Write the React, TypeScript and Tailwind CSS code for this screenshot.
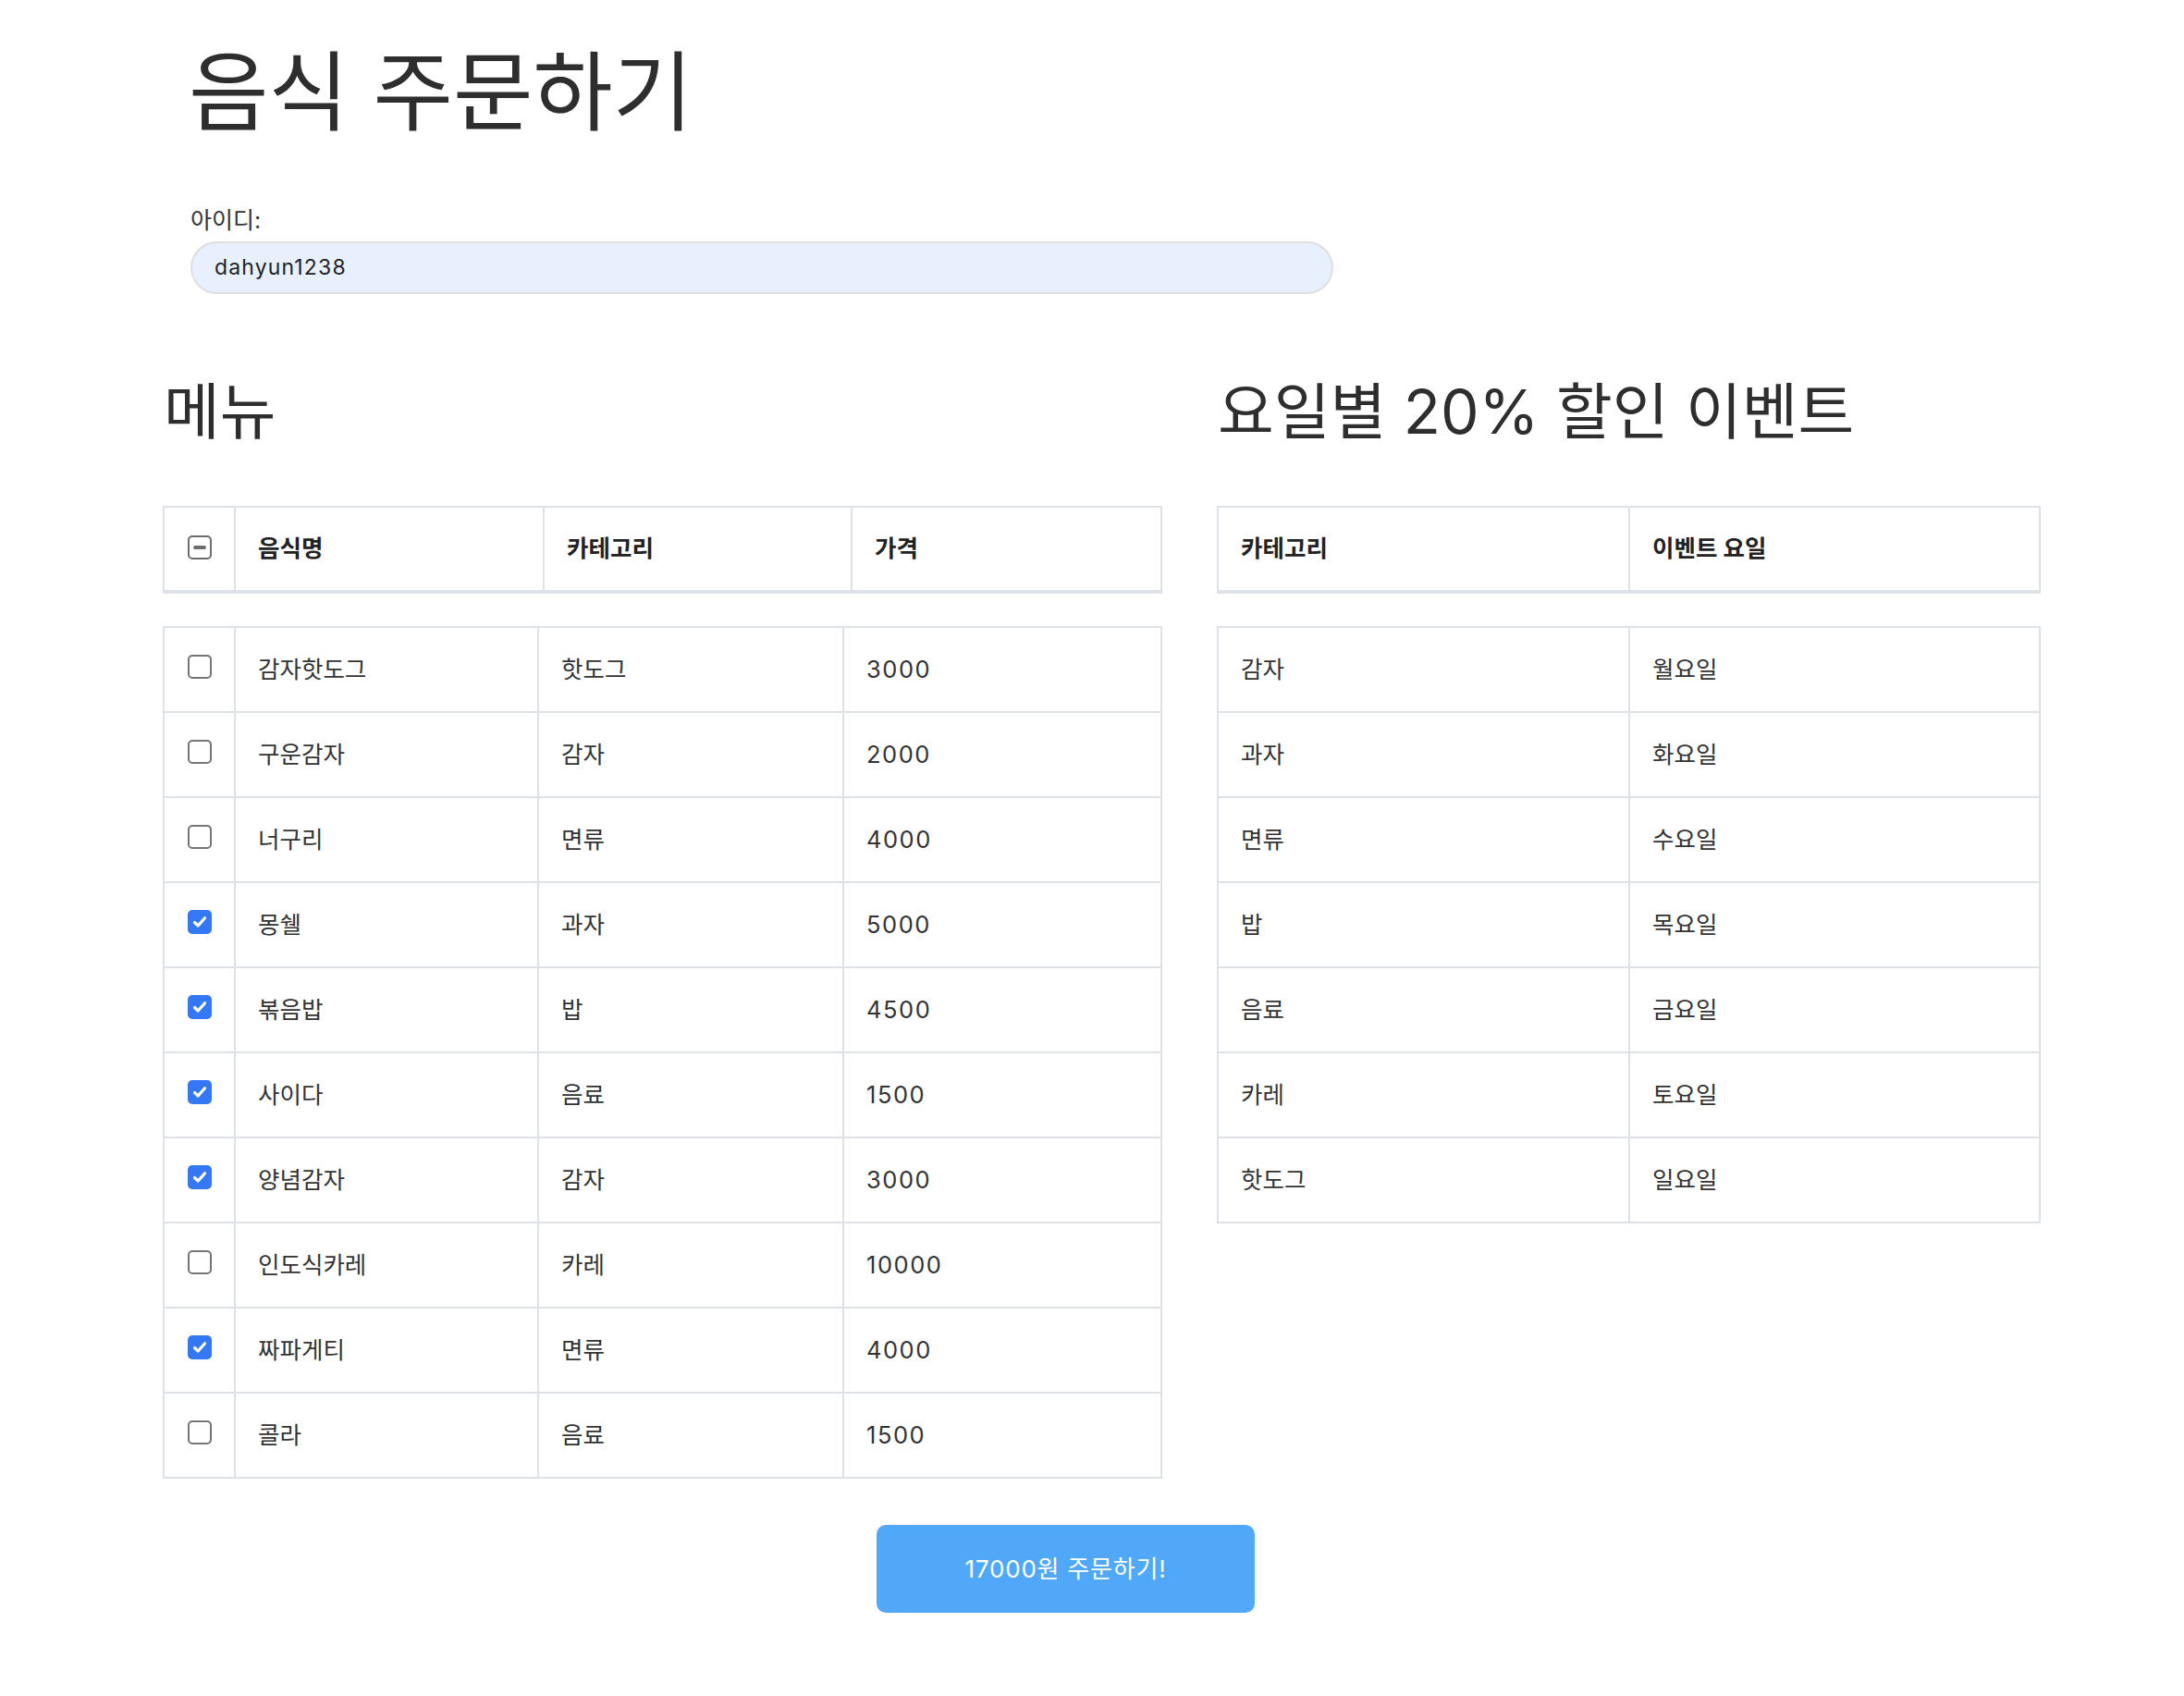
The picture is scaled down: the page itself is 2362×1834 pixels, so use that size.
import React from "react";

const items: [string, string, string, boolean][] = [
  ["감자핫도그", "핫도그", "3000", false],
  ["구운감자", "감자", "2000", false],
  ["너구리", "면류", "4000", false],
  ["몽쉘", "과자", "5000", true],
  ["볶음밥", "밥", "4500", true],
  ["사이다", "음료", "1500", true],
  ["양념감자", "감자", "3000", true],
  ["인도식카레", "카레", "10000", false],
  ["짜파게티", "면류", "4000", true],
  ["콜라", "음료", "1500", false],
];

const events: [string, string][] = [
  ["감자", "월요일"],
  ["과자", "화요일"],
  ["면류", "수요일"],
  ["밥", "목요일"],
  ["음료", "금요일"],
  ["카레", "토요일"],
  ["핫도그", "일요일"],
];

function Box({ checked }: { checked: boolean }) {
  if (checked) {
    return (
      <div className="w-[26px] h-[26px] rounded-[5px] bg-[#3478f6] flex items-center justify-center">
        <svg width="18" height="18" viewBox="0 0 18 18">
          <path d="M3.5 9.5 L7.2 13 L14.5 4.8" stroke="white" strokeWidth="3.2" fill="none" strokeLinecap="round" strokeLinejoin="round" />
        </svg>
      </div>
    );
  }
  return <div className="w-[26px] h-[26px] rounded-[5px] border-2 border-[#767676] bg-white" />;
}

function Indeterminate() {
  return (
    <div className="w-[26px] h-[26px] rounded-[5px] border-2 border-[#6d6d6d] bg-white flex items-center justify-center">
      <div className="w-[14px] h-[4px] rounded-[2px] bg-[#6d6d6d]" />
    </div>
  );
}

const cell = "border-2 border-[#dee2e6] align-middle";
const th = `${cell} border-b-4 pl-[24px] text-left text-[25.5px] font-bold text-[#222]`;
const td = `${cell} pl-[24px] text-[25.5px]`;

export default function App() {
  return (
    <div className="min-h-screen bg-white text-[#333] font-['Inter','Noto_Sans_CJK_KR',sans-serif] pt-[53px]">
      <div className="pl-[206px]">
        <h1 className="text-[94px] leading-none font-normal -ml-[2px] text-[#2e2e2e]">음식 주문하기</h1>
        <div className="mt-[79px] text-[25px] leading-none">아이디:</div>
        <div className="mt-[10px] w-[1236px] h-[57px] rounded-full bg-[#e8f0fe] border-2 border-[#dfdfdf] flex items-center pl-[24px] text-[23px] tracking-[0.05em] text-[#222]">
          dahyun1238
        </div>
      </div>

      <div className="flex pl-[176px] gap-[61px] mt-[94px]">
        <div className="w-[1079px]">
          <h2 className="text-[66px] leading-none font-normal ml-[1px] text-[#2e2e2e]">메뉴</h2>
          <table className="mt-[69px] w-[1079px] table-fixed border-collapse">
            <colgroup>
              <col className="w-[77px]" />
              <col className="w-[334px]" />
              <col className="w-[333px]" />
              <col className="w-[335px]" />
            </colgroup>
            <thead>
              <tr>
                <th className={`${cell} border-b-4 h-[92px] pl-[25px] text-left`}>
                  <div className="-mt-[4px]"><Indeterminate /></div>
                </th>
                <th className={th}>음식명</th>
                <th className={th}>카테고리</th>
                <th className={th}>가격</th>
              </tr>
            </thead>
          </table>
          <table className="mt-[35px] w-[1079px] table-fixed border-collapse">
            <colgroup>
              <col className="w-[77px]" />
              <col className="w-[328px]" />
              <col className="w-[330px]" />
              <col className="w-[344px]" />
            </colgroup>
            <tbody>
              {items.map(([name, cat, price, checked], i) => (
                <tr key={i}>
                  <td className={`${cell} h-[92px] pl-[25px]`}>
                    <div className="-mt-[6px]"><Box checked={checked} /></div>
                  </td>
                  <td className={td}>{name}</td>
                  <td className={td}>{cat}</td>
                  <td className={`${td} tracking-[0.06em]`}>{price}</td>
                </tr>
              ))}
            </tbody>
          </table>
        </div>

        <div className="w-[889px]">
          <h2 className="text-[66px] leading-none font-normal ml-[1px] text-[#2e2e2e]">요일별 20% 할인 이벤트</h2>
          <table className="mt-[69px] w-[889px] table-fixed border-collapse">
            <colgroup>
              <col className="w-[445px]" />
              <col className="w-[444px]" />
            </colgroup>
            <thead>
              <tr>
                <th className={`${th} h-[92px]`}>카테고리</th>
                <th className={th}>이벤트 요일</th>
              </tr>
            </thead>
          </table>
          <table className="mt-[35px] w-[889px] table-fixed border-collapse">
            <colgroup>
              <col className="w-[445px]" />
              <col className="w-[444px]" />
            </colgroup>
            <tbody>
              {events.map(([c, d], i) => (
                <tr key={i}>
                  <td className={`${td} h-[92px]`}>{c}</td>
                  <td className={td}>{d}</td>
                </tr>
              ))}
            </tbody>
          </table>
        </div>
      </div>

      <div className="pl-[948px] mt-[50px] pb-[80px]">
        <button className="w-[409px] h-[95px] rounded-[10px] bg-[#52a8f8] text-white text-[26px] tracking-[0.03em] flex items-center justify-center">
          17000원 주문하기!
        </button>
      </div>
    </div>
  );
}
